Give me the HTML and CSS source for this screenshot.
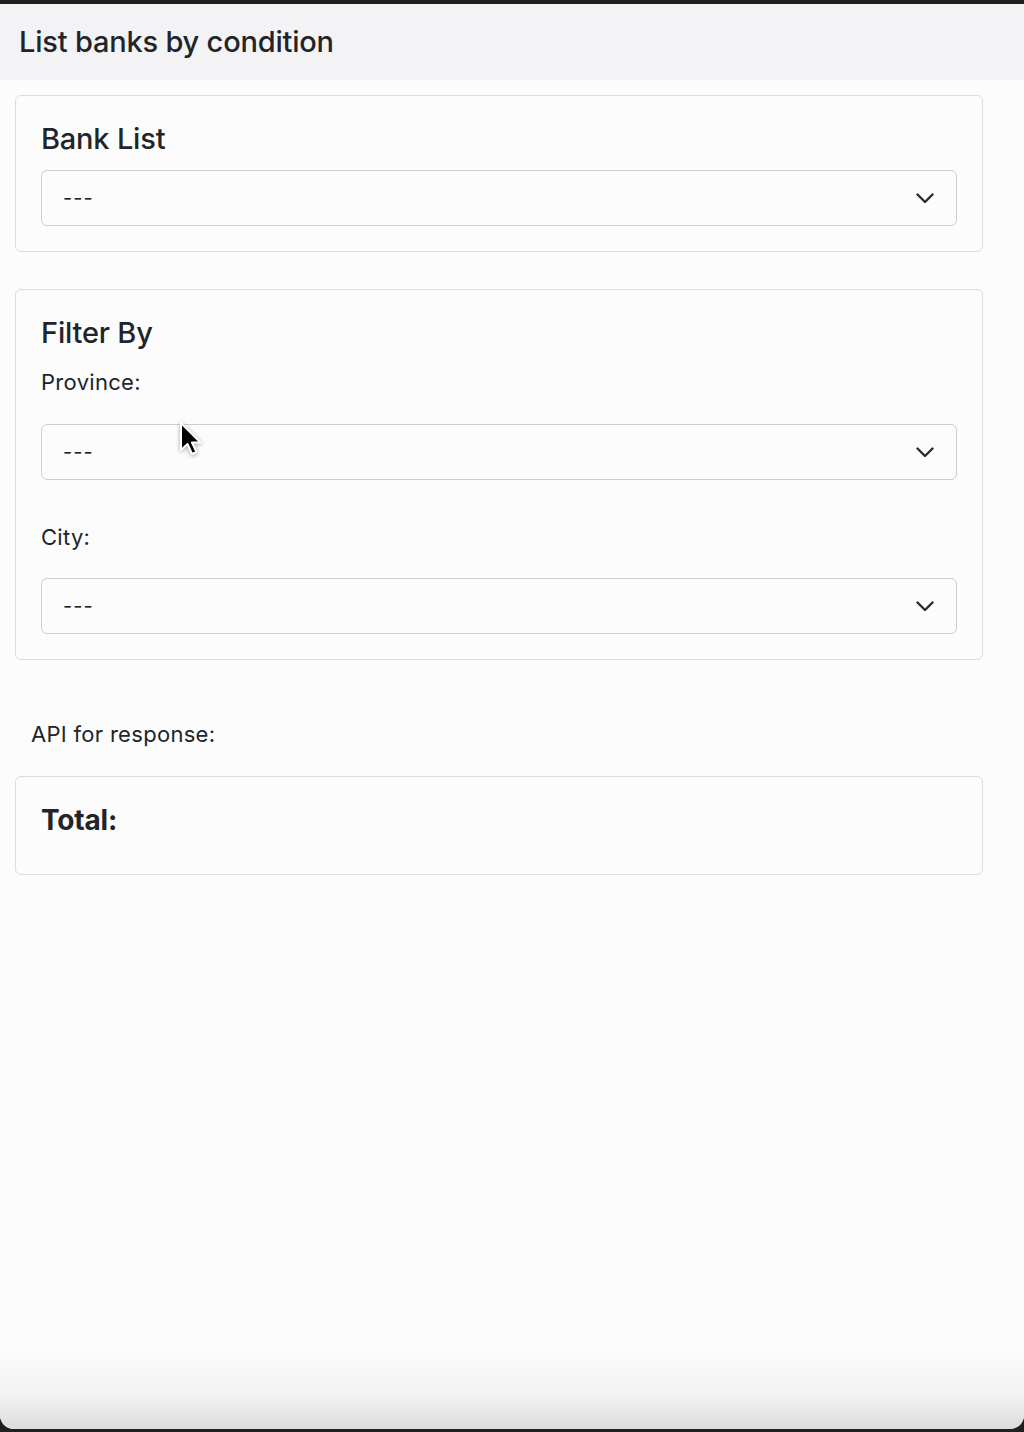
FILE: index.html
```html
<!DOCTYPE html>
<html lang="en">
<head>
<meta charset="utf-8">
<title>List banks by condition</title>
<link rel="stylesheet" href="styles.css">
</head>
<body>
<div class="frame">
  <div class="page">
    <header class="header">
      <h1 class="title">List banks by condition</h1>
    </header>
    <main class="content">
      <section class="card card-bank">
        <h2 class="card-title">Bank List</h2>
        <div class="select"><span class="select-value">---</span>
          <svg class="chev" width="18" height="11" viewBox="0 0 18 11"><path d="M1.5 1.5 L9 9 L16.5 1.5" fill="none" stroke="#2b2b2b" stroke-width="2.4" stroke-linecap="round" stroke-linejoin="round"/></svg>
        </div>
      </section>
      <section class="card card-filter">
        <h2 class="card-title filter-title">Filter By</h2>
        <div class="label">Province:</div>
        <div class="select select-province"><span class="select-value">---</span>
          <svg class="chev" width="18" height="11" viewBox="0 0 18 11"><path d="M1.5 1.5 L9 9 L16.5 1.5" fill="none" stroke="#2b2b2b" stroke-width="2.4" stroke-linecap="round" stroke-linejoin="round"/></svg>
          <svg class="cursor" width="26" height="40" viewBox="0 0 26 40"><path d="M2 2 L2 29 L8.5 23 L13 33 L17.5 31 L13 21.5 L21.5 21.5 Z" fill="#000" stroke="#fff" stroke-width="2" stroke-linejoin="round"/></svg>
        </div>
        <div class="label label-city">City:</div>
        <div class="select"><span class="select-value">---</span>
          <svg class="chev" width="18" height="11" viewBox="0 0 18 11"><path d="M1.5 1.5 L9 9 L16.5 1.5" fill="none" stroke="#2b2b2b" stroke-width="2.4" stroke-linecap="round" stroke-linejoin="round"/></svg>
        </div>
      </section>
      <p class="api">API for response:</p>
      <section class="card card-total">
        <h2 class="card-title total-title">Total:</h2>
      </section>
    </main>
    <div class="shade"></div>
  </div>
</div>
</body>
</html>
```

FILE: styles.css
```css
* { box-sizing: border-box; }
html, body { margin: 0; padding: 0; }
body {
  background: #1f1f1f;
  font-family: Inter, "Noto Sans", "Liberation Sans", sans-serif;
  color: #212529;
}
.frame {
  padding-top: 4px;
  padding-bottom: 3px;
  background: #1f1f1f;
}
.page {
  min-height: 1425px;
  background: #fcfcfd;
  border-radius: 0 0 14px 14px;
  display: flex;
  flex-direction: column;
  overflow: hidden;
}
.header {
  height: 76px;
  background: #f3f3f5;
  display: flex;
  align-items: center;
  padding-left: 19px;
}
.title {
  margin: 0;
  font-size: 29px;
  font-weight: 500;
  letter-spacing: -0.2px;
  line-height: 36px;
}
.content {
  padding: 15px 41px 0 15px;
}
.card {
  border: 1px solid #dcdcdf;
  border-radius: 6px;
  padding: 25px;
}
.card-title {
  margin: 0 0 13px 0;
  font-size: 29px;
  font-weight: 500;
  line-height: 36px;
  letter-spacing: -0.2px;
}
.select {
  height: 56px;
  border: 1px solid #cdced4;
  border-radius: 6px;
  display: flex;
  align-items: center;
  justify-content: space-between;
  padding: 0 22px 0 21px;
}
.select-province { position: relative; }
.cursor {
  position: absolute;
  left: 137px;
  top: -4px;
  filter: drop-shadow(0 1px 2px rgba(0,0,0,0.35));
}
.select-value {
  font-size: 20px;
  letter-spacing: 1px;
}
.chev { display: block; }
.card-filter { margin-top: 37px; }
.filter-title { margin-bottom: 16px; }
.label {
  font-size: 22px;
  line-height: 30px;
  letter-spacing: 0.3px;
  margin-bottom: 27px;
}
.label-city { margin-top: 42px; margin-bottom: 26px; }
.api {
  margin: 59px 0 27px 16px;
  font-size: 22px;
  line-height: 30px;
  letter-spacing: 0.3px;
}
.total-title {
  font-size: 28px;
  font-weight: 700;
  margin-bottom: 11px;
}
.shade {
  margin-top: auto;
  height: 80px;
  background: linear-gradient(to bottom, rgba(252,252,253,0) 0%, #f3f3f3 55%, #dcdcdc 100%);
}
```
